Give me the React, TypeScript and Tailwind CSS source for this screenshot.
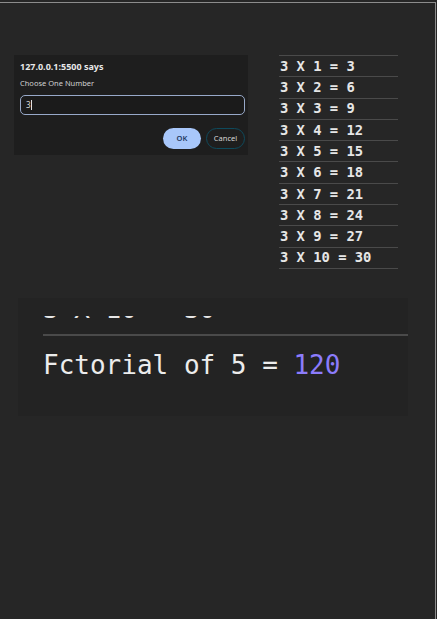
const rows = Array.from({ length: 10 }, (_, i) => `3 X ${i + 1} = ${3 * (i + 1)}`);

function PromptDialog() {
  return (
    <div className="w-[234px] h-[100px] bg-[#1e1e1e] pl-[6px] pr-[3px] pt-[5px] font-['Noto_Sans',sans-serif]">
      <p className="text-[9px] font-bold text-[#e8e8e8] leading-[14px]">127.0.0.1:5500 says</p>
      <p className="mt-[3px] text-[7.5px] text-[#d0d0d0] leading-[12px]">Choose One Number</p>
      <div className="mt-[6px] w-[225px] h-[20px] rounded-[5px] border-[1.5px] border-[#98a9c9] bg-[#1b1b1b] flex items-center pl-[5px]">
        <span className="text-[8px] text-[#d8d8d8] leading-none">3</span>
        <span className="w-px h-[10px] bg-[#e0e0e0]" />
      </div>
      <div className="mt-[13px] flex justify-end gap-[5px] w-[225px]">
        <button className="w-[38px] h-[21px] rounded-full bg-[#a8c7fa] text-[7.5px] font-semibold text-[#1f3760]">OK</button>
        <button className="w-[39px] h-[21px] rounded-full border border-[#0e4a5c] text-[7.5px] text-[#d6d6d6]">Cancel</button>
      </div>
    </div>
  );
}

function TimesTable() {
  return (
    <div className="w-[119px] border-t border-[#4a4a4a] font-['DejaVu_Sans_Mono',monospace]">
      {rows.map((r) => (
        <div key={r} className="h-[21.3px] border-b border-[#4a4a4a] pl-px flex items-center text-[13.8px] font-bold text-[#e6e6e6] whitespace-pre">
          {r}
        </div>
      ))}
    </div>
  );
}

export default function App() {
  return (
    <div className="w-[437px] h-[619px] bg-[#262626] pt-[2px] overflow-hidden">
      <div className="w-[436px] h-[617px] border-t border-r border-[#8c8c8c]">
        <div className="flex pt-[52px]">
          <div className="ml-[14px]">
            <PromptDialog />
          </div>
          <div className="ml-[31px]">
            <TimesTable />
          </div>
        </div>
        <div className="ml-[18px] mt-[29px] w-[390px] h-[118px] bg-[#232323] pt-[18px] font-['DejaVu_Sans_Mono',monospace]">
          {/* scrolled-off row, only the bottom of its glyphs shows */}
          <div className="h-[5px] overflow-hidden relative">
            <span className="absolute left-[25px] top-[-20px] text-[26px] leading-[26px] text-[#e6e6e6] whitespace-pre">3 X 10 = 30</span>
          </div>
          <div className="ml-[25px] mt-[13px] h-[2px] bg-[#4a4a4a]" />
          <p className="ml-[25px] mt-[12px] text-[26px] leading-[34px] text-[#ececec] whitespace-pre">
            Fctorial of 5 = <span className="text-[#8c7cfc]">120</span>
          </p>
        </div>
      </div>
    </div>
  );
}
